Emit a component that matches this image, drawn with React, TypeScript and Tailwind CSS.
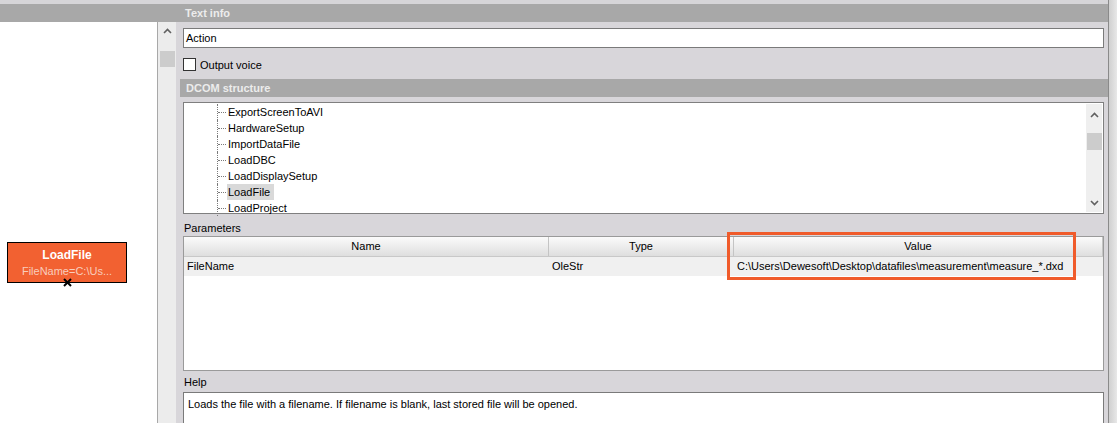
import React from "react";

const font = { fontFamily: '"Liberation Sans", Arial, sans-serif' };

function Up() {
  return (
    <svg width="9" height="6" viewBox="0 0 9 6">
      <path d="M1 5 L4.5 1.5 L8 5" fill="none" stroke="#606060" strokeWidth="1.6" />
    </svg>
  );
}
function Down() {
  return (
    <svg width="9" height="6" viewBox="0 0 9 6">
      <path d="M1 1 L4.5 4.5 L8 1" fill="none" stroke="#606060" strokeWidth="1.6" />
    </svg>
  );
}

const treeItems = [
  "ExportScreenToAVI",
  "HardwareSetup",
  "ImportDataFile",
  "LoadDBC",
  "LoadDisplaySetup",
  "LoadFile",
  "LoadProject",
];

export default function App() {
  return (
    <div
      className="flex w-[1117px] h-[423px] overflow-hidden bg-[#d8d6da] text-[11px] text-black"
      style={font}
    >
      <div className="flex flex-col w-[1108px] h-full">
        <div className="h-[4px] bg-[#d6d5d8]" />
        <div className="h-[18px] bg-[#a8a8a8] flex items-center pl-[185px] font-bold text-[#ececec] text-[11px]">
          Text info
        </div>
        <div className="flex flex-1 min-h-0">
          {/* canvas */}
          <div className="relative w-[157px] bg-white">
            <div className="absolute left-[7px] top-[220px] w-[120px] h-[41px] bg-[#f26131] border border-black flex flex-col items-center pt-[5px]">
              <div className="font-bold text-white text-[12px] leading-[15px]">LoadFile</div>
              <div className="text-[#f8cdbd] text-[11px] leading-[14px] mt-[1px]">FileName=C:\Us...</div>
            </div>
            <svg className="absolute left-[63px] top-[256px]" width="9" height="9" viewBox="0 0 9 9">
              <path d="M1 1 L8 8 M8 1 L1 8" stroke="#000" strokeWidth="2" />
            </svg>
          </div>
          <div className="w-[1px] bg-[#a8a8a8]" />
          {/* scrollbar */}
          <div className="w-[18px] bg-[#ececec] flex flex-col items-center">
            <div className="mt-[6px]">
              <Up />
            </div>
            <div className="mt-[17px] w-[15px] h-[16px] bg-[#cccccc]" />
          </div>
          {/* main panel */}
          <div className="flex-1 flex flex-col pl-[4px]">
            <div className="pl-[3px] pr-[4px] pt-[6px]">
              <div className="h-[20px] bg-white border border-[#7a7a7a] flex items-center pl-[2px] text-[11px]">
                Action
              </div>
            </div>
            <div className="pl-[3px] mt-[10px] flex items-center h-[13px]">
              <div className="w-[13px] h-[13px] bg-white border border-[#333]" />
              <span className="ml-[4px] leading-[13px] pt-[1px]">Output voice</span>
            </div>
            <div className="mt-[8px] h-[18px] bg-[#a8a8a8] flex items-center pl-[6px] font-bold text-[#ececec]">
              DCOM structure
            </div>
            <div className="pl-[3px] pr-[4px] mt-[5px]">
              <div className="h-[112px] bg-white border border-[#7f7f7f] flex">
                <div className="flex-1 flex flex-col pt-[1px] pl-[33px]">
                  {treeItems.map((t, i) => (
                    <div key={t} className="flex items-center h-[16px]">
                      <div className="relative w-[10px] h-[16px]">
                        <div className="absolute left-0 top-0 h-full border-l border-dotted border-[#7a7a7a]" />
                        <div className="absolute left-[1px] top-[8px] w-[8px] border-t border-dotted border-[#7a7a7a]" />
                      </div>
                      <span
                        className={
                          i === 5
                            ? "bg-[#d9d9d9] px-[1px] h-[16px] leading-[16px] w-[47px]"
                            : "px-[1px]"
                        }
                      >
                        {t}
                      </span>
                    </div>
                  ))}
                </div>
                <div className="w-[16px] my-[1px] mr-[1px] bg-[#efefef] flex flex-col items-center">
                  <div className="mt-[8px]">
                    <Up />
                  </div>
                  <div className="mt-[15px] w-[15px] h-[17px] bg-[#cccccc]" />
                  <div className="mt-auto mb-[6px]">
                    <Down />
                  </div>
                </div>
              </div>
            </div>
            <div className="pl-[4px] mt-[7px] h-[14px] leading-[14px]">Parameters</div>
            <div className="pl-[3px] pr-[4px] mt-[1px]">
              <div className="relative h-[135px] bg-white border border-[#9a9a9a]">
                <div className="flex h-[20px] border-b border-[#c8c8c8] bg-gradient-to-b from-[#fbfbfb] to-[#dedede]">
                  <div className="w-[365px] flex items-center justify-center border-r border-[#c4c4c4]">Name</div>
                  <div className="w-[185px] flex items-center justify-center border-r border-[#c4c4c4]">Type</div>
                  <div className="flex-1 flex items-center justify-center border-r border-[#c4c4c4]">Value</div>
                </div>
                <div className="flex h-[19px] bg-[#f0f0f0] items-center">
                  <div className="w-[366px] pl-[3px]">FileName</div>
                  <div className="w-[185px] pl-[2px]">OleStr</div>
                  <div className="flex-1 pl-[2px]">C:\Users\Dewesoft\Desktop\datafiles\measurement\measure_*.dxd</div>
                </div>
                <div className="absolute left-[543px] top-[-5px] w-[349px] h-[48px] border-[3px] border-[#f05b2b]" />
              </div>
            </div>
            <div className="pl-[4px] mt-[4px] h-[14px] leading-[14px]">Help</div>
            <div className="pl-[3px] pr-[4px] mt-[3px] flex-1">
              <div className="h-full bg-white border border-[#7a7a7a] border-b-0 pl-[4px] pt-[3px]">
                Loads the file with a filename. If filename is blank, last stored file will be opened.
              </div>
            </div>
          </div>
        </div>
      </div>
      <div className="w-[1px] bg-[#8a8a8a]" />
      <div className="flex-1 bg-gradient-to-r from-[#d0d0d0] to-[#e8e8e8]" />
    </div>
  );
}
